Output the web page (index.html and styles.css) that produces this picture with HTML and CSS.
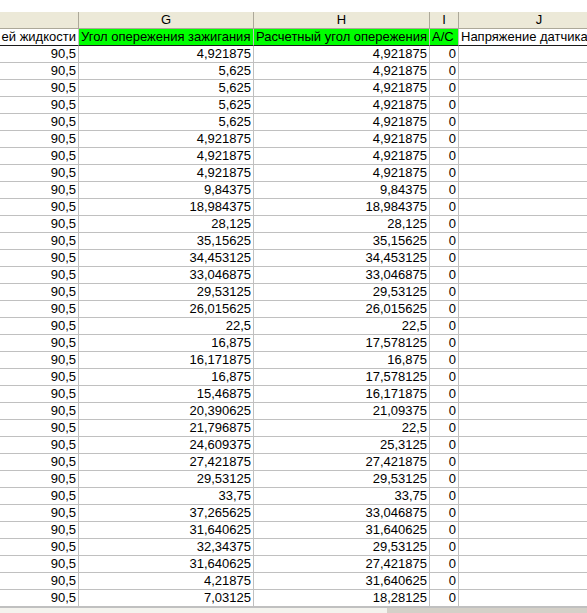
FILE: index.html
```html
<!DOCTYPE html>
<html lang="ru">
<head>
<meta charset="utf-8">
<title>Лист</title>
<link rel="stylesheet" href="styles.css">
</head>
<body>
<div class="sheet">
  <div class="topbar"></div>
  <table class="grid">
    <colgroup>
      <col class="c-f"><col class="c-g"><col class="c-h"><col class="c-i"><col class="c-j">
    </colgroup>
    <thead>
      <tr class="letters">
        <th></th><th>G</th><th>H</th><th>I</th><th>J</th>
      </tr>
    </thead>
    <tbody>
      <tr class="titles">
        <td class="clip">ей жидкости</td>
        <td class="green">Угол опережения зажигания</td>
        <td class="green">Расчетный угол опережения</td>
        <td class="green">A/C</td>
        <td class="over">Напряжение датчика</td>
      </tr>
      <tr><td>90,5</td><td>4,921875</td><td>4,921875</td><td>0</td><td></td></tr>
      <tr><td>90,5</td><td>5,625</td><td>4,921875</td><td>0</td><td></td></tr>
      <tr><td>90,5</td><td>5,625</td><td>4,921875</td><td>0</td><td></td></tr>
      <tr><td>90,5</td><td>5,625</td><td>4,921875</td><td>0</td><td></td></tr>
      <tr><td>90,5</td><td>5,625</td><td>4,921875</td><td>0</td><td></td></tr>
      <tr><td>90,5</td><td>4,921875</td><td>4,921875</td><td>0</td><td></td></tr>
      <tr><td>90,5</td><td>4,921875</td><td>4,921875</td><td>0</td><td></td></tr>
      <tr><td>90,5</td><td>4,921875</td><td>4,921875</td><td>0</td><td></td></tr>
      <tr><td>90,5</td><td>9,84375</td><td>9,84375</td><td>0</td><td></td></tr>
      <tr><td>90,5</td><td>18,984375</td><td>18,984375</td><td>0</td><td></td></tr>
      <tr><td>90,5</td><td>28,125</td><td>28,125</td><td>0</td><td></td></tr>
      <tr><td>90,5</td><td>35,15625</td><td>35,15625</td><td>0</td><td></td></tr>
      <tr><td>90,5</td><td>34,453125</td><td>34,453125</td><td>0</td><td></td></tr>
      <tr><td>90,5</td><td>33,046875</td><td>33,046875</td><td>0</td><td></td></tr>
      <tr><td>90,5</td><td>29,53125</td><td>29,53125</td><td>0</td><td></td></tr>
      <tr><td>90,5</td><td>26,015625</td><td>26,015625</td><td>0</td><td></td></tr>
      <tr><td>90,5</td><td>22,5</td><td>22,5</td><td>0</td><td></td></tr>
      <tr><td>90,5</td><td>16,875</td><td>17,578125</td><td>0</td><td></td></tr>
      <tr><td>90,5</td><td>16,171875</td><td>16,875</td><td>0</td><td></td></tr>
      <tr><td>90,5</td><td>16,875</td><td>17,578125</td><td>0</td><td></td></tr>
      <tr><td>90,5</td><td>15,46875</td><td>16,171875</td><td>0</td><td></td></tr>
      <tr><td>90,5</td><td>20,390625</td><td>21,09375</td><td>0</td><td></td></tr>
      <tr><td>90,5</td><td>21,796875</td><td>22,5</td><td>0</td><td></td></tr>
      <tr><td>90,5</td><td>24,609375</td><td>25,3125</td><td>0</td><td></td></tr>
      <tr><td>90,5</td><td>27,421875</td><td>27,421875</td><td>0</td><td></td></tr>
      <tr><td>90,5</td><td>29,53125</td><td>29,53125</td><td>0</td><td></td></tr>
      <tr><td>90,5</td><td>33,75</td><td>33,75</td><td>0</td><td></td></tr>
      <tr><td>90,5</td><td>37,265625</td><td>33,046875</td><td>0</td><td></td></tr>
      <tr><td>90,5</td><td>31,640625</td><td>31,640625</td><td>0</td><td></td></tr>
      <tr><td>90,5</td><td>32,34375</td><td>29,53125</td><td>0</td><td></td></tr>
      <tr><td>90,5</td><td>31,640625</td><td>27,421875</td><td>0</td><td></td></tr>
      <tr><td>90,5</td><td>4,21875</td><td>31,640625</td><td>0</td><td></td></tr>
      <tr><td>90,5</td><td>7,03125</td><td>18,28125</td><td>0</td><td></td></tr>
    </tbody>
  </table>
  <div class="bottombar"><div class="bar-light"></div><div class="bar-dark"></div></div>
</div>
</body>
</html>
```

FILE: styles.css
```css
html, body {
  margin: 0;
  padding: 0;
  background: #ffffff;
}

.sheet {
  width: 587px;
  height: 613px;
  overflow: hidden;
  font-family: "Liberation Sans", Arial, sans-serif;
  font-size: 13px;
  color: #000000;
}

.topbar {
  height: 12px;
  background: #ffffff;
}

.grid {
  border-collapse: separate;
  border-spacing: 0;
  table-layout: fixed;
  width: 620px;
}

.c-f { width: 79px; }
.c-g { width: 175px; }
.c-h { width: 176px; }
.c-i { width: 29px; }
.c-j { width: 161px; }

.grid th,
.grid td {
  box-sizing: border-box;
  height: 17px;
  padding: 0 2px 0 2px;
  line-height: 16px;
  white-space: nowrap;
  overflow: hidden;
  border-right: 1px solid #c0c0c0;
  border-bottom: 1px solid #c0c0c0;
}

.grid td {
  text-align: right;
}

.letters th {
  background: #ece9d8;
  font-weight: normal;
  text-align: center;
  border-right: 1px solid #aca899;
  border-bottom: 1px solid #aca899;
}

.titles td {
  text-align: left;
  border-bottom: 1px solid #1a1a1a;
}

.titles .green {
  background: #00ff00;
}

.titles .clip {
  text-align: right;
  padding: 0 2px 0 0;
}

.titles .over {
  overflow: visible;
}

.bottombar {
  display: flex;
  height: 6px;
  border-top: 1px solid #c0c0c0;
}

.bar-light {
  width: 387px;
  background: #f4f3ee;
}

.bar-dark {
  flex: 1;
  background: #d4d0c8;
}
```
